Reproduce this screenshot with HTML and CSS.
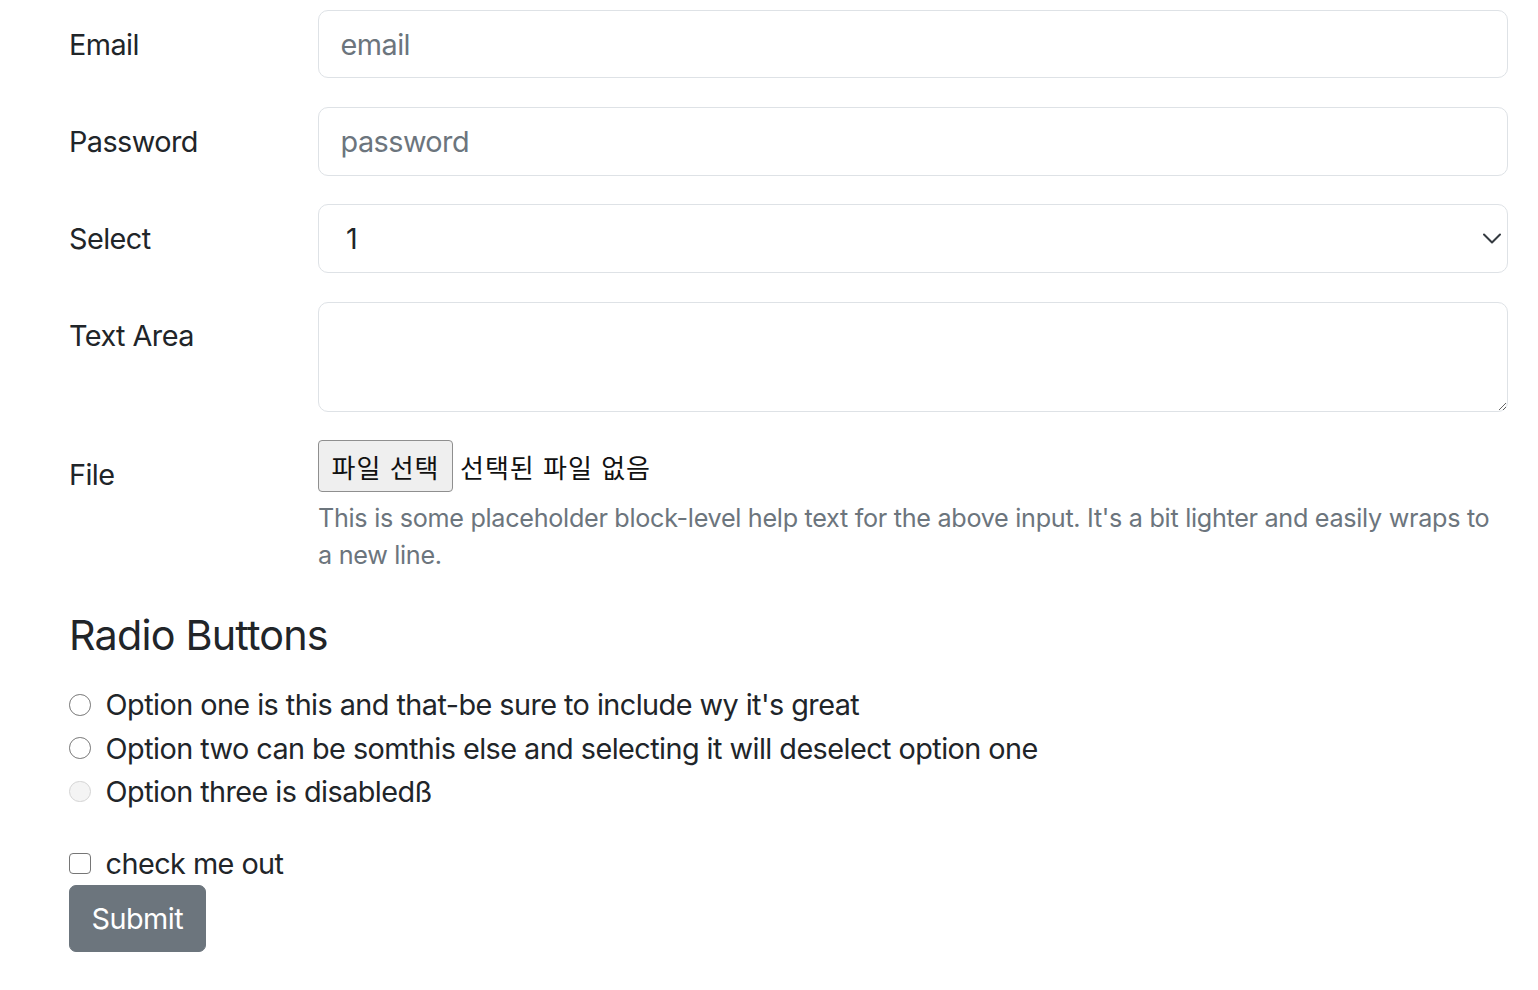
FILE: index.html
```html
<!DOCTYPE html>
<html lang="ko">
<head>
<meta charset="utf-8">
<title>Form</title>
<link rel="stylesheet" href="styles.css">
</head>
<body>
<form class="form">
  <div class="row">
    <label class="label" for="email">Email</label>
    <div class="field"><input class="input" id="email" type="email" placeholder="email"></div>
  </div>
  <div class="row">
    <label class="label" for="pw">Password</label>
    <div class="field"><input class="input" id="pw" type="password" placeholder="password"></div>
  </div>
  <div class="row">
    <label class="label" for="sel">Select</label>
    <div class="field">
      <div class="select">
        <span class="select-value">1</span>
        <svg class="chevron" width="18" height="11" viewBox="0 0 18 11"><path d="M1 1.5 L9 9.5 L17 1.5" fill="none" stroke="#343a40" stroke-width="2" stroke-linecap="round" stroke-linejoin="round"/></svg>
      </div>
    </div>
  </div>
  <div class="row">
    <label class="label" for="ta">Text Area</label>
    <div class="field"><textarea class="input textarea" id="ta"></textarea></div>
  </div>
  <div class="row">
    <label class="label">File</label>
    <div class="field">
      <div class="file">
        <span class="file-btn">파일 선택</span>
        <span class="file-name">선택된 파일 없음</span>
      </div>
      <div class="help">This is some placeholder block-level help text for the above input. It's a bit lighter and easily wraps to a new line.</div>
    </div>
  </div>
  <fieldset class="fieldset">
    <legend class="legend">Radio Buttons</legend>
    <label class="check"><span class="radio"></span>Option one is this and that-be sure to include wy it's great</label>
    <label class="check"><span class="radio"></span>Option two can be somthis else and selecting it will deselect option one</label>
    <label class="check"><span class="radio disabled"></span>Option three is disabledß</label>
  </fieldset>
  <label class="check"><span class="box"></span>check me out</label>
  <button class="submit" type="button">Submit</button>
</form>
</body>
</html>
```

FILE: styles.css
```css
* { box-sizing: border-box; }
html, body { margin: 0; background: #fff; }
body {
  font-family: Inter, "Noto Sans", "Noto Sans CJK KR", sans-serif;
  font-size: 28.8px;
  line-height: 1.5;
  letter-spacing: -0.55px;
  color: #212529;
}
.form { padding: 10px 30px 20px 69px; }
.row { display: flex; margin-bottom: 28.8px; }
.label { width: 249px; flex: none; padding-top: 12.6px; line-height: 43.2px; }
.field { flex: 1; min-width: 0; }
.input {
  display: block;
  width: 100%;
  height: 68.4px;
  padding: 10.8px 21.6px;
  font: inherit;
  letter-spacing: -0.55px;
  line-height: 43.2px;
  color: #212529;
  border: 1.8px solid #dee2e6;
  border-radius: 10px;
  background: #fff;
  outline: none;
}
.input::placeholder { color: #6c757d; opacity: 1; }
.textarea { height: 110px; resize: vertical; }
.select {
  display: flex;
  align-items: center;
  justify-content: space-between;
  height: 68.4px;
  padding: 10.8px 6px 10.8px 27px;
  border: 1.8px solid #dee2e6;
  border-radius: 10px;
  background: #fff;
}
.select-value { line-height: 43.2px; }
.chevron { display: block; }
.file { display: flex; align-items: center; height: 52px; gap: 7px; }
.file-btn, .file-name {
  font-family: "Noto Sans CJK KR", sans-serif;
  font-size: 26px;
  letter-spacing: 1px;
  color: #111;
}
.file-btn {
  height: 52px;
  width: 135px;
  display: flex;
  align-items: center;
  justify-content: center;
  background: #efefef;
  border: 1.8px solid #8f8f8f;
  border-radius: 4px;
}
.help {
  margin-top: 7.2px;
  font-size: 25.2px;
  line-height: 37.8px;
  letter-spacing: -0.3px;
  color: #6c757d;
}
.fieldset { border: 0; margin: 0 0 28.8px; padding: 3px 0 0; }
.legend {
  padding: 0;
  width: 100%;
  font-size: 41.3px;
  line-height: 62px;
  letter-spacing: -0.8px;
  margin-bottom: 14.4px;
  font-weight: 400;
}
.check { display: flex; align-items: center; gap: 15px; line-height: 43.2px; }
.radio {
  width: 21.6px; height: 21.6px; flex: none;
  border: 1.8px solid #767676;
  border-radius: 50%;
  background: #fff;
}
.radio.disabled { border-color: #d4d4d4; background: #f4f4f4; }
.box {
  width: 21.6px; height: 21.6px; flex: none;
  border: 1.8px solid #767676;
  border-radius: 4px;
  background: #fff;
}
.submit {
  display: block;
  font: inherit;
  letter-spacing: -0.55px;
  line-height: 43.2px;
  padding: 10.8px 21.6px;
  color: #fff;
  background: #6c757d;
  border: 1.8px solid #6c757d;
  border-radius: 7px;
}
```
